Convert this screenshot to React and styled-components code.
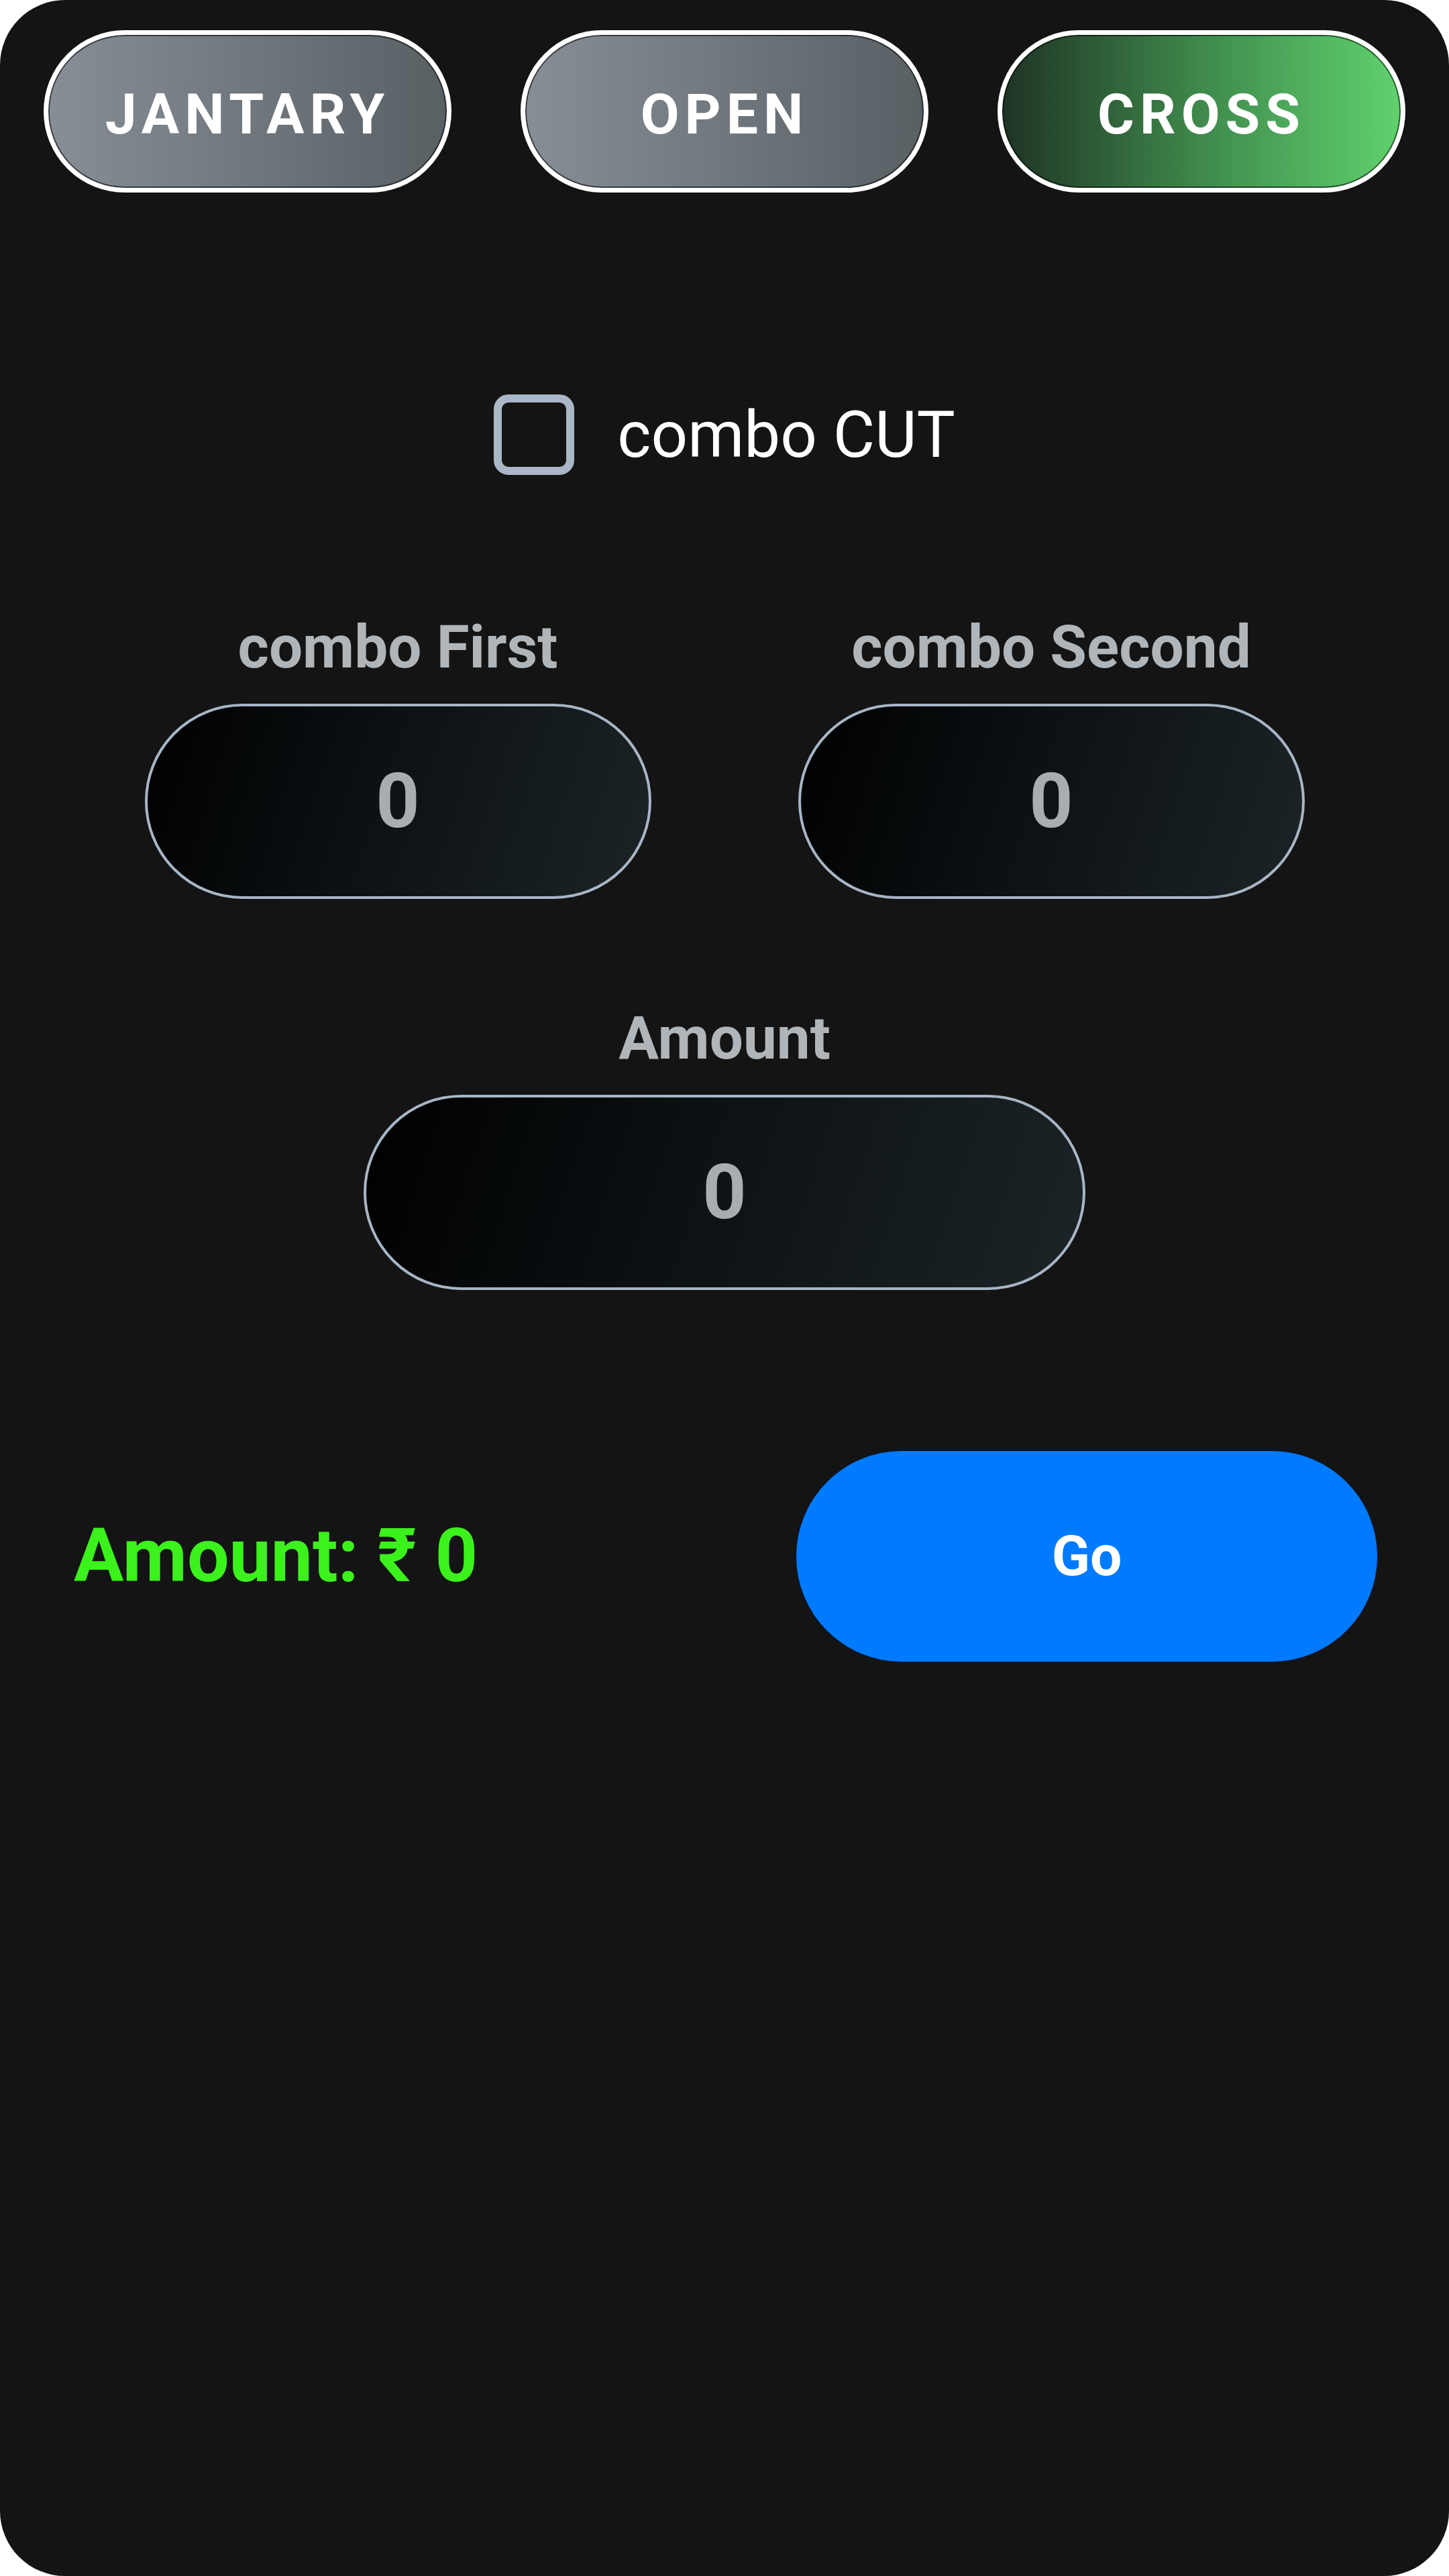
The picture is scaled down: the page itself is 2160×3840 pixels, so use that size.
import { useState } from 'react';
import styled, { createGlobalStyle } from 'styled-components';

const GlobalStyle = createGlobalStyle`
  html, body {
    margin: 0;
    padding: 0;
    background: #ffffff;
  }
  body {
    font-family: Roboto, 'Liberation Sans', 'Noto Sans', sans-serif;
  }
  * {
    box-sizing: border-box;
  }
`;

const tabs = ['Jantary', 'Open', 'Cross'];

function App() {
  const [active, setActive] = useState('Cross');
  const [cut, setCut] = useState(false);
  const [values, setValues] = useState({ first: '0', second: '0', amount: '0' });

  const handleChange = (e) => {
    setValues({ ...values, [e.target.name]: e.target.value });
  };

  const total = Number(values.amount) || 0;

  return (
    <>
      <GlobalStyle />
      <Screen>
        <Tabs>
          {tabs.map((t) => (
            <Tab key={t} $active={active === t} onClick={() => setActive(t)}>
              {t}
            </Tab>
          ))}
        </Tabs>

        {/* combo cut toggle */}
        <CheckRow>
          <Check
            type='checkbox'
            checked={cut}
            onChange={() => setCut(!cut)}
          />
          combo CUT
        </CheckRow>

        <ComboRow>
          <Field>
            <Label>combo First</Label>
            <NumberInput
              name='first'
              value={values.first}
              onChange={handleChange}
            />
          </Field>
          <Field>
            <Label>combo Second</Label>
            <NumberInput
              name='second'
              value={values.second}
              onChange={handleChange}
            />
          </Field>
        </ComboRow>

        <AmountField>
          <Label>Amount</Label>
          <NumberInput
            name='amount'
            value={values.amount}
            onChange={handleChange}
          />
        </AmountField>

        <Footer>
          <Total>Amount: ₹ {total}</Total>
          <GoButton type='button'>Go</GoButton>
        </Footer>
      </Screen>
    </>
  );
}

const Screen = styled.main`
  width: 2160px;
  height: 3840px;
  background: #141414;
  border-radius: 97px;
  overflow: hidden;
  display: flex;
  flex-direction: column;
  padding: 45px 65px 0;
`;

const Tabs = styled.nav`
  display: grid;
  grid-template-columns: repeat(3, 608px);
  justify-content: space-between;
`;

const Tab = styled.button`
  height: 242px;
  border-radius: 999px;
  border: 7px solid #ffffff;
  box-shadow: inset 0 0 0 2px rgba(0, 0, 0, 0.55);
  background: ${(p) =>
    p.$active
      ? 'linear-gradient(90deg, #1f3324 0%, #3f8a4c 50%, #60d26e 100%)'
      : 'linear-gradient(90deg, #878e96 0%, #596064 100%)'};
  color: #ffffff;
  font-family: Roboto, 'Liberation Sans', sans-serif;
  font-weight: 700;
  font-size: 84px;
  letter-spacing: 8px;
  text-transform: uppercase;
  cursor: pointer;
  padding: 8px 0 0;
`;

const CheckRow = styled.label`
  margin-top: 301px;
  display: flex;
  align-items: center;
  justify-content: center;
  gap: 64px;
  color: #ffffff;
  font-size: 96px;
  line-height: 1;
  cursor: pointer;
`;

const Check = styled.input`
  appearance: none;
  margin: 0;
  width: 120px;
  height: 120px;
  border: 12px solid #a9b7c6;
  border-radius: 22px;
  background: transparent;
  cursor: pointer;
  &:checked {
    background: #a9b7c6;
  }
`;

const ComboRow = styled.section`
  margin-top: 204px;
  display: grid;
  grid-template-columns: repeat(2, 755px);
  justify-content: center;
  column-gap: 219px;
`;

const Field = styled.div`
  display: flex;
  flex-direction: column;
  align-items: center;
  gap: 30px;
`;

const AmountField = styled(Field)`
  margin-top: 155px;
  width: 1076px;
  align-self: center;
`;

const Label = styled.span`
  color: #b0b5b9;
  font-weight: 700;
  font-size: 89px;
  line-height: 1.2;
`;

const NumberInput = styled.input`
  width: 100%;
  height: 291px;
  border: 4px solid #a7b6c6;
  border-radius: 999px;
  background: linear-gradient(108deg, #000000 0%, #0c1113 45%, #1c2427 100%);
  color: #a8adb1;
  font-family: Roboto, 'Liberation Sans', sans-serif;
  font-weight: 700;
  font-size: 114px;
  text-align: center;
  outline: none;
  padding: 0 60px;
`;

const Footer = styled.section`
  margin-top: 240px;
  display: flex;
  align-items: center;
  justify-content: space-between;
  padding: 0 42px 0 45px;
`;

const Total = styled.p`
  margin: 0;
  color: #3cf21c;
  font-weight: 700;
  font-size: 111px;
  line-height: 1.2;
`;

const GoButton = styled.button`
  width: 866px;
  height: 314px;
  border: none;
  border-radius: 999px;
  background: #007bff;
  box-shadow: 0 0 3px rgba(0, 30, 80, 0.8);
  color: #ffffff;
  font-family: Roboto, 'Liberation Sans', sans-serif;
  font-weight: 700;
  font-size: 84px;
  cursor: pointer;
`;

export default App;
